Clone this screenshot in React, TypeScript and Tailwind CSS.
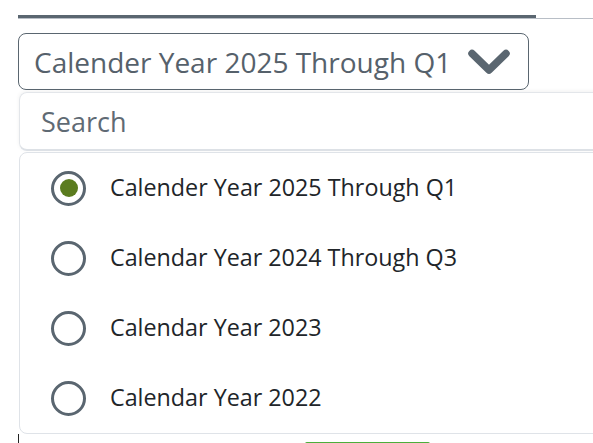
import React from "react";

const options = [
  "Calender Year 2025 Through Q1",
  "Calendar Year 2024 Through Q3",
  "Calendar Year 2023",
  "Calendar Year 2022",
];

const Radio = ({ checked }: { checked: boolean }) => (
  <span className="flex h-[35px] w-[35px] shrink-0 items-center justify-center rounded-full border-[3px] border-[#5a6670]">
    {checked && <span className="h-[18px] w-[18px] rounded-full bg-[#5b7c1f]" />}
  </span>
);

export default function App() {
  return (
    <div className="relative h-[443px] w-[593px] overflow-hidden bg-white font-['Open_Sans',sans-serif]">
      {/* progress bar */}
      <div className="ml-[18px] mt-[15px] border-b border-[#b8bec6]">
        <div className="h-[3px] w-[518px] bg-[#5a6670]" />
      </div>

      {/* select trigger */}
      <div className="ml-[18px] mt-[14px] flex h-[57px] w-[511px] items-center justify-between rounded-[8px] border border-[#5a6670] pl-[15px] pr-[18px]">
        <span className="text-[28px] leading-none text-[#56616b]">Calender Year 2025 Through Q1</span>
        <svg width="42" height="26" viewBox="0 0 42 26" fill="none">
          <polyline
            points="4,4.5 21,21 38,4.5"
            stroke="#5a6670"
            strokeWidth="7.5"
            strokeLinecap="round"
            strokeLinejoin="round"
          />
        </svg>
      </div>

      {/* dropdown panel */}
      <div className="ml-[19px] mt-[2px] flex h-[59px] w-[620px] items-center rounded-[8px] border border-[#e3e6ea] border-b-2 border-b-[#dde1e6] pl-[21px] shadow-[0_-1px_4px_rgba(0,0,0,0.06)]">
        <span className="text-[27px] leading-none text-[#5f6a74]">Search</span>
      </div>
      <div className="ml-[19px] mt-[1px] w-[620px] rounded-[8px] border border-[#dfe3e8]">
        {options.map((label, i) => (
          <div key={label} className="flex h-[70px] items-center gap-[24px] pl-[31px]">
            <Radio checked={i === 0} />
            <span className="text-[23.3px] leading-none text-[#212529]">{label}</span>
          </div>
        ))}
      </div>

      {/* page content under the dropdown */}
      <div className="flex h-[10px] items-end">
        <div className="ml-[18px] h-[10px] w-px bg-[#222]" />
        <div className="ml-[286px] h-[2px] w-[125px] rounded-t-[6px] bg-[#4cae3c]" />
      </div>
    </div>
  );
}
